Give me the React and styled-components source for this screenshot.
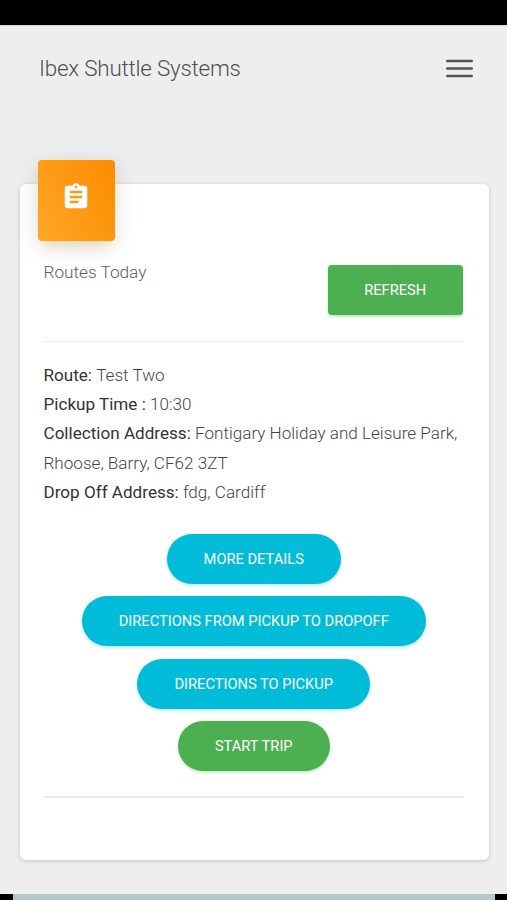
import React from "react";
import styled, { createGlobalStyle } from "styled-components";

const GlobalStyle = createGlobalStyle`
  *, *::before, *::after { box-sizing: border-box; }
  body {
    margin: 0;
    background: #eeeeee;
    color: #3c4858;
    font-family: Roboto, "Liberation Sans", sans-serif;
    font-weight: 300;
  }
`;

const Screen = styled.div`
  display: flex;
  flex-direction: column;
  height: 900px;
  overflow: hidden;
`;

const StatusBar = styled.div`
  flex: none;
  height: 25px;
  background: #000;
`;

const Header = styled.header`
  display: flex;
  flex: none;
  align-items: center;
  justify-content: space-between;
  height: 84px;
  padding: 0 34px 0 39px;
  border-top: 1px solid #d6d6d6;
`;

const Brand = styled.h1`
  margin: 0;
  color: #505050;
  font-size: 22.4px;
  font-weight: 300;
  letter-spacing: -0.21px;
  line-height: 30px;
  white-space: nowrap;
`;

const MenuButton = styled.button`
  width: 27px;
  height: 19px;
  margin-top: 1px;
  padding: 0;
  border: 0;
  background: none;
`;

const MenuIcon = styled.svg`
  display: block;
  stroke: #555;
  stroke-width: 2.5;
  stroke-linecap: round;
`;

const Card = styled.main`
  flex: none;
  height: 676px;
  margin: 75px 18.5px 0 19.5px;
  padding: 0 25px 0 24px;
  border-radius: 6px;
  background: #fff;
  box-shadow: 0 1px 4px rgba(0, 0, 0, 0.18);
`;

const IconTile = styled.div`
  display: flex;
  justify-content: center;
  width: 77.5px;
  height: 80.5px;
  margin: -24px 0 0 -6px;
  padding-top: 22px;
  border-radius: 4px;
  background: linear-gradient(60deg, #ffa726, #fb8c00);
  box-shadow: 0 5px 26px rgba(0, 0, 0, 0.12), 0 9px 13px -6px rgba(255, 152, 0, 0.24);
`;

const CardHeader = styled.div`
  display: flex;
  align-items: flex-start;
  justify-content: space-between;
  height: 76px;
  margin-top: 24px;
  padding-right: 0.5px;
`;

const CardTitle = styled.h2`
  margin: -8px 0 0;
  color: #56606c;
  font-size: 17.2px;
  font-weight: 300;
  line-height: 30px;
`;

const Divider = styled.hr`
  height: 1.5px;
  margin: 0;
  border: 0;
  background: #ebebeb;
`;

const Details = styled.dl`
  margin: 18.7px 0 0;
  color: #444;
  font-size: 17.1px;
  line-height: 29.3px;
`;

const Detail = styled.div`
  margin-right: -6px;
`;

const Term = styled.dt`
  display: inline;
  color: #333;
  font-weight: 400;
`;

const Value = styled.dd`
  display: inline;
  margin: 0;
`;

const Actions = styled.div`
  display: flex;
  flex-direction: column;
  align-items: center;
  gap: 12.3px;
  margin: 27px 0 25px;
  padding-left: 0.5px;
`;

const tones = {
  info: { fill: "#00bcd8", shade: "rgba(0, 188, 212, 0.35)" },
  success: { fill: "#4caf50", shade: "rgba(76, 175, 80, 0.35)" },
};

const Button = styled.button`
  width: ${(p) => p.$width}px;
  height: 50px;
  padding: 0;
  border: 0;
  border-radius: ${(p) => (p.$round ? 25 : 4)}px;
  background: ${(p) => tones[p.$tone].fill};
  box-shadow: 0 1.5px 3px ${(p) => tones[p.$tone].shade};
  color: #fff;
  font-family: inherit;
  font-size: 14.67px;
  font-weight: 400;
  line-height: 50px;
  text-transform: uppercase;
  white-space: nowrap;
`;

const BottomStrip = styled.div`
  flex: none;
  height: 6px;
  margin-top: auto;
  border: solid #000;
  border-width: 0 12.5px 0 13.5px;
  background: #b7c6cb;
`;

const trip = [
  ["Route:", "Test Two"],
  ["Pickup Time :", "10:30"],
  ["Collection Address:", "Fontigary Holiday and Leisure Park, Rhoose, Barry, CF62 3ZT"],
  ["Drop Off Address:", "fdg, Cardiff"],
];

const actions = [
  ["More Details", "info", 174],
  ["Directions from pickup to dropoff", "info", 344],
  ["Directions to pickup", "info", 233],
  ["Start Trip", "success", 152],
];

export default function App() {
  return (
    <>
      <GlobalStyle />
      <Screen>
        <StatusBar />
        <Header>
          <Brand>Ibex Shuttle Systems</Brand>
          <MenuButton aria-label="Menu">
            <MenuIcon width="27" height="19" viewBox="0 0 27 19" aria-hidden="true">
              <path d="M1.2 2.1h24.6M1.2 9.5h24.6M1.2 16.9h24.6" />
            </MenuIcon>
          </MenuButton>
        </Header>
        <Card>
          <IconTile>
            <svg width="30" height="30" viewBox="0 0 24 24" fill="#fff" aria-hidden="true">
              <path d="M19 3h-4.18C14.4 1.84 13.3 1 12 1c-1.3 0-2.4.84-2.82 2H5c-1.1 0-2 .9-2 2v14c0 1.1.9 2 2 2h14c1.1 0 2-.9 2-2V5c0-1.1-.9-2-2-2zm-7 0c.55 0 1 .45 1 1s-.45 1-1 1-1-.45-1-1 .45-1 1-1zm2 14H7v-2h7v2zm3-4H7v-2h10v2zm0-4H7V7h10v2z" />
            </svg>
          </IconTile>
          <CardHeader>
            <CardTitle>Routes Today</CardTitle>
            <Button $tone="success" $width={135.5}>Refresh</Button>
          </CardHeader>
          <Divider />
          <Details>
            {trip.map(([term, value]) => (
              <Detail key={term}>
                <Term>{term}</Term> <Value>{value}</Value>
              </Detail>
            ))}
          </Details>
          <Actions>
            {actions.map(([label, tone, width]) => (
              <Button key={label} $round $tone={tone} $width={width}>{label}</Button>
            ))}
          </Actions>
          <Divider />
        </Card>
        <BottomStrip />
      </Screen>
    </>
  );
}
